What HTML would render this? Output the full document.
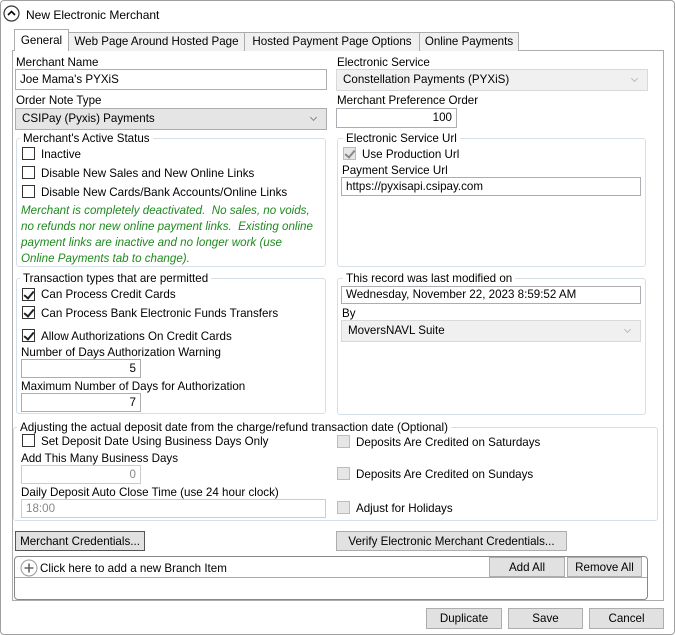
<!DOCTYPE html>
<html><head><meta charset="utf-8"><style>
*{box-sizing:border-box;margin:0;padding:0}
body{width:675px;height:635px;background:#fff;font-family:"Liberation Sans",sans-serif;font-size:11.6px;color:#000;position:relative;overflow:hidden}
.a{position:absolute;white-space:nowrap}
.t{position:absolute;white-space:nowrap;line-height:16px}
.in{position:absolute;border:1px solid #abadb3;background:#fff;padding:0 4px;line-height:17px}
.cb{position:absolute;border:1px solid #acacac;background:#e5e5e5;padding:0 6px;line-height:20px}
.cb::after{content:"";position:absolute;right:10px;top:6px;width:4px;height:4px;border-right:1px solid #888;border-bottom:1px solid #888;transform:rotate(45deg)}
.cb.d{background:#f0f0f0;border-color:#d9d9d9}
.cb.d::after{border-color:#bbb}
.gb{position:absolute;border:1px solid #d5dfe5;border-radius:3px}
.lg{position:absolute;background:#fff;padding:0 3px;line-height:14px;top:-7px;left:3px}
.ck{position:absolute;width:13px;height:13px;border:1px solid #333;background:#fff}
.ck.on::after{content:"";position:absolute;left:3px;top:0px;width:4px;height:8px;border-right:2px solid #222;border-bottom:2px solid #222;transform:rotate(40deg)}
.ck.dis{border-color:#bcbcbc;background:#e6e6e6}
.ck.dis.on::after{border-color:#888}
.btn{position:absolute;border:1px solid #adadad;background:#e1e1e1;text-align:center;line-height:19px}
.tab{position:absolute;border:1px solid #acacac;border-bottom:none;background:#f0f0f0;text-align:center;line-height:18px}
.g{color:#1f8a1f;font-style:italic}
</style></head><body>
<div class="a" style="left:0;top:0;width:675px;height:635px;border:1px solid #a0a0a0;border-radius:4px"></div>
<svg class="a" style="left:3px;top:5px" width="17" height="17"><circle cx="8.5" cy="8.5" r="7.5" fill="#fff" stroke="#333" stroke-width="1.2"/><path d="M5 10 L8.5 6.5 L12 10" fill="none" stroke="#000" stroke-width="1.6"/></svg>
<div class="t" style="left:26px;top:7px;font-size:12px">New Electronic Merchant</div>

<div class="a" style="left:12px;top:50px;width:652px;height:551px;border:1px solid #acacac"></div>
<div class="tab" style="left:68px;top:32px;width:177px;height:19px">Web Page Around Hosted Page</div>
<div class="tab" style="left:244px;top:32px;width:176px;height:19px">Hosted Payment Page Options</div>
<div class="tab" style="left:419px;top:32px;width:100px;height:19px">Online Payments</div>
<div class="tab" style="left:14px;top:29px;width:55px;height:22px;background:#fff;line-height:22px">General</div>

<div class="t" style="left:16px;top:55px">Merchant Name</div>
<div class="in" style="left:15px;top:69px;width:312px;height:21px;line-height:19px">Joe Mama's PYXiS</div>
<div class="t" style="left:16px;top:93px">Order Note Type</div>
<div class="cb" style="left:15px;top:108px;width:312px;height:22px">CSIPay (Pyxis) Payments</div>

<div class="t" style="left:337px;top:55px">Electronic Service</div>
<div class="cb d" style="left:336px;top:69px;width:312px;height:22px">Constellation Payments (PYXiS)</div>
<div class="t" style="left:337px;top:93px">Merchant Preference Order</div>
<div class="in" style="left:336px;top:108px;width:121px;height:20px;text-align:right;line-height:18px">100</div>

<div class="gb" style="left:16px;top:138px;width:310px;height:129px"><div class="lg">Merchant's Active Status</div></div>
<div class="ck" style="left:22px;top:147px"></div><div class="t" style="left:41px;top:147px">Inactive</div>
<div class="ck" style="left:22px;top:166px"></div><div class="t" style="left:41px;top:166px">Disable New Sales and New Online Links</div>
<div class="ck" style="left:22px;top:185px"></div><div class="t" style="left:41px;top:185px">Disable New Cards/Bank Accounts/Online Links</div>
<div class="t g" style="left:21px;top:203px;line-height:16px">Merchant is completely deactivated.&nbsp; No sales, no voids,<br>no refunds nor new online payment links.&nbsp; Existing online<br>payment links are inactive and no longer work (use<br>Online Payments tab to change).</div>

<div class="gb" style="left:337px;top:138px;width:309px;height:129px"><div class="lg" style="left:5px">Electronic Service Url</div></div>
<div class="ck dis on" style="left:343px;top:147px"></div><div class="t" style="left:362px;top:147px">Use Production Url</div>
<div class="t" style="left:342px;top:163px">Payment Service Url</div>
<div class="in" style="left:341px;top:177px;width:300px;height:19px">https://pyxisapi.csipay.com</div>

<div class="gb" style="left:16px;top:278px;width:310px;height:136px"><div class="lg">Transaction types that are permitted</div></div>
<div class="ck on" style="left:22px;top:288px"></div><div class="t" style="left:41px;top:287px">Can Process Credit Cards</div>
<div class="ck on" style="left:22px;top:306px"></div><div class="t" style="left:41px;top:306px">Can Process Bank Electronic Funds Transfers</div>
<div class="ck on" style="left:22px;top:329px"></div><div class="t" style="left:41px;top:329px">Allow Authorizations On Credit Cards</div>
<div class="t" style="left:21px;top:345px">Number of Days Authorization Warning</div>
<div class="in" style="left:21px;top:359px;width:120px;height:19px;text-align:right">5</div>
<div class="t" style="left:21px;top:379px">Maximum Number of Days for Authorization</div>
<div class="in" style="left:21px;top:393px;width:120px;height:19px;text-align:right">7</div>

<div class="gb" style="left:337px;top:278px;width:309px;height:137px"><div class="lg" style="left:5px">This record was last modified on</div></div>
<div class="in" style="left:341px;top:286px;width:300px;height:18px;line-height:16px">Wednesday, November 22, 2023 8:59:52 AM</div>
<div class="t" style="left:342px;top:306px">By</div>
<div class="cb d" style="left:341px;top:320px;width:300px;height:22px;padding-left:6px">MoversNAVL Suite</div>

<div class="gb" style="left:13px;top:427px;width:645px;height:94px"><div class="lg">Adjusting the actual deposit date from the charge/refund transaction date (Optional)</div></div>
<div class="ck" style="left:22px;top:434px"></div><div class="t" style="left:41px;top:434px">Set Deposit Date Using Business Days Only</div>
<div class="t" style="left:21px;top:451px">Add This Many Business Days</div>
<div class="in" style="left:21px;top:465px;width:120px;height:19px;text-align:right;color:#888;border-color:#ccc">0</div>
<div class="t" style="left:21px;top:485px">Daily Deposit Auto Close Time (use 24 hour clock)</div>
<div class="in" style="left:21px;top:499px;width:305px;height:19px;color:#888;border-color:#ccc">18:00</div>
<div class="ck dis" style="left:337px;top:435px"></div><div class="t" style="left:356px;top:435px">Deposits Are Credited on Saturdays</div>
<div class="ck dis" style="left:337px;top:467px"></div><div class="t" style="left:356px;top:467px">Deposits Are Credited on Sundays</div>
<div class="ck dis" style="left:337px;top:501px"></div><div class="t" style="left:356px;top:501px">Adjust for Holidays</div>

<div class="btn" style="left:15px;top:531px;width:130px;height:20px;border-color:#555">Merchant Credentials...</div>
<div class="btn" style="left:336px;top:531px;width:231px;height:20px">Verify Electronic Merchant Credentials...</div>

<div class="a" style="left:14px;top:556px;width:634px;height:44px;border:1px solid #888;border-radius:4px"></div>
<div class="a" style="left:15px;top:577px;width:632px;border-top:1px solid #aaa"></div>
<svg class="a" style="left:20px;top:559px" width="18" height="18"><circle cx="9" cy="9" r="8" fill="#fff" stroke="#999"/><path d="M9 4.5V13.5M4.5 9H13.5" stroke="#666" stroke-width="1.6"/></svg>
<div class="t" style="left:40px;top:561px">Click here to add a new Branch Item</div>
<div class="btn" style="left:489px;top:557px;width:76px;height:20px">Add All</div>
<div class="btn" style="left:567px;top:557px;width:75px;height:20px">Remove All</div>

<div class="btn" style="left:426px;top:608px;width:76px;height:21px">Duplicate</div>
<div class="btn" style="left:508px;top:608px;width:75px;height:21px">Save</div>
<div class="btn" style="left:589px;top:608px;width:75px;height:21px">Cancel</div>
</body></html>
